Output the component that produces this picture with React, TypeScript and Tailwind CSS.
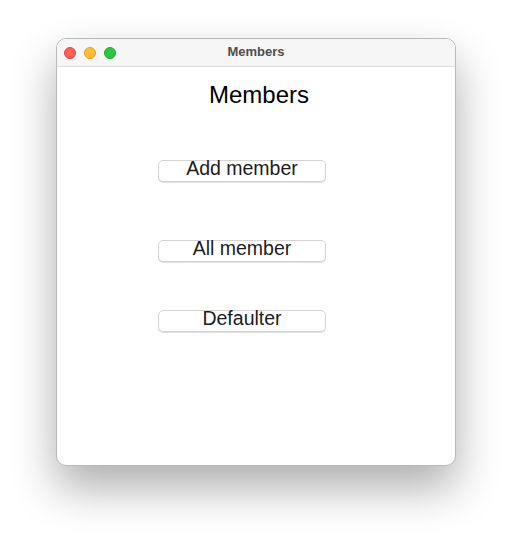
import React from "react";

function Btn({ label }: { label: string }) {
  return (
    <button className="ml-[101px] w-[168px] h-[22px] rounded-[5px] bg-white border border-[#d4d4d4] shadow-[0_1px_0_rgba(0,0,0,0.12)] flex items-center justify-center text-[19.5px] leading-[22px] text-[#1c1c1c]">
      <span className="-mt-[6px]">{label}</span>
    </button>
  );
}

export default function App() {
  return (
    <div
      className="w-[512px] h-[540px] bg-white pt-[38px] pl-[56px]"
      style={{ fontFamily: '"Liberation Sans", Arial, sans-serif' }}
    >
      <div className="w-[400px] h-[428px] rounded-[10px] bg-white border border-[#b9b9b9] shadow-[0_22px_45px_rgba(0,0,0,0.32)] overflow-hidden flex flex-col">
        <div className="h-[28px] bg-[#f6f6f6] border-b border-[#dcdcdc] flex items-center relative shrink-0">
          <div className="flex items-center gap-[8px] pl-[7px]">
            <div className="w-[12px] h-[12px] rounded-full bg-[#fe5f57] border border-[#e0443e]" />
            <div className="w-[12px] h-[12px] rounded-full bg-[#febc2e] border border-[#dea123]" />
            <div className="w-[12px] h-[12px] rounded-full bg-[#28c840] border border-[#1aab29]" />
          </div>
          <div className="absolute inset-0 flex items-center justify-center pb-[2px] text-[13px] font-bold text-[#4d4d4d]">
            Members
          </div>
        </div>
        <div className="flex flex-col items-start">
          <div className="ml-[152px] mt-[14px] text-[24px] leading-[28px] text-black">Members</div>
          <div className="mt-[51px]">
            <Btn label="Add member" />
          </div>
          <div className="mt-[58px]">
            <Btn label="All member" />
          </div>
          <div className="mt-[48px]">
            <Btn label="Defaulter" />
          </div>
        </div>
      </div>
    </div>
  );
}
